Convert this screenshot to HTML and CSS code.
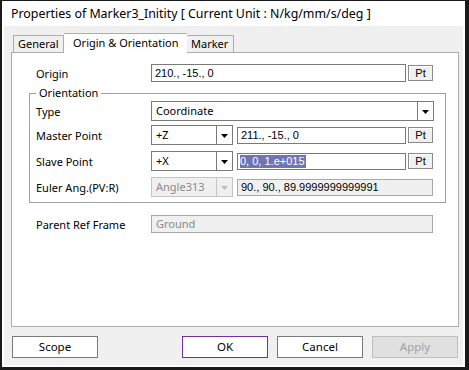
FILE: index.html
```html
<!DOCTYPE html>
<html>
<head>
<meta charset="utf-8">
<link rel="stylesheet" href="styles.css">
</head>
<body>
<div class="window">
  <div class="titlebar">Properties of Marker3_Initity [ Current Unit : N/kg/mm/s/deg ]</div>
  <div class="client">
    <div class="tabs">
      <div class="tab t-general">General</div>
      <div class="tab active">Origin &amp; Orientation</div>
      <div class="tab t-marker">Marker</div>
    </div>
    <div class="panel">
      <div class="row origin-row">
        <span class="lbl">Origin</span>
        <div class="edit w-origin">210., -15., 0</div>
        <div class="pt">Pt</div>
      </div>
      <fieldset class="group">
        <legend>Orientation</legend>
        <div class="row type-row">
          <span class="lbl">Type</span>
          <div class="combo w-type"><span class="val">Coordinate</span><span class="arrow"><svg width="7" height="4" viewBox="0 0 7 4"><path d="M0 0H7L3.5 4Z" fill="#000"/></svg></span></div>
        </div>
        <div class="row master-row">
          <span class="lbl">Master Point</span>
          <div class="combo w-small"><span class="val">+Z</span><span class="arrow"><svg width="7" height="4" viewBox="0 0 7 4"><path d="M0 0H7L3.5 4Z" fill="#000"/></svg></span></div>
          <div class="edit w-pt">211., -15., 0</div>
          <div class="pt">Pt</div>
        </div>
        <div class="row slave-row">
          <span class="lbl">Slave Point</span>
          <div class="combo w-small"><span class="val">+X</span><span class="arrow"><svg width="7" height="4" viewBox="0 0 7 4"><path d="M0 0H7L3.5 4Z" fill="#000"/></svg></span></div>
          <div class="edit w-pt"><span class="sel">0, 0, 1.e+015</span></div>
          <div class="pt">Pt</div>
        </div>
        <div class="row euler-row">
          <span class="lbl">Euler Ang.(PV:R)</span>
          <div class="combo w-small disabled"><span class="val">Angle313</span><span class="arrow"><svg width="7" height="4" viewBox="0 0 7 4"><path d="M0 0H7L3.5 4Z" fill="#bcbcbc"/></svg></span></div>
          <div class="edit w-euler readonly">90., 90., 89.9999999999991</div>
        </div>
      </fieldset>
      <div class="row parent-row">
        <span class="lbl">Parent Ref Frame</span>
        <div class="edit w-parent readonly gray-text">Ground</div>
      </div>
    </div>
    <div class="buttons">
      <div class="btn">Scope</div>
      <div class="spacer"></div>
      <div class="btn default">OK</div>
      <div class="btn">Cancel</div>
      <div class="btn disabled">Apply</div>
    </div>
  </div>
</div>
</body>
</html>
```

FILE: styles.css
```css
* { box-sizing: border-box; }
html, body { margin: 0; padding: 0; background: #fff; }
body { font-family: "Noto Sans", "Open Sans", sans-serif; font-size: 11px; color: #000; }

.window {
  width: 469px;
  height: 370px;
  border-style: solid;
  border-color: #1a1a1a;
  border-width: 1px 4px 3px 2px;
  padding: 0 2px 2px 2px;
  background: #fff;
  display: flex;
  flex-direction: column;
}
.titlebar {
  height: 25px;
  padding-left: 7px;
  padding-top: 4px;
  font-size: 12.4px;
  line-height: 17px;
  white-space: nowrap;
  color: #000;
}
.client {
  flex: 1;
  background: #f0f0f0;
  padding: 7px 4px 0 7px;
  display: flex;
  flex-direction: column;
}
.tabs {
  display: flex;
  align-items: flex-end;
  padding-left: 2px;
  height: 20px;
  position: relative;
  z-index: 1;
  margin-bottom: -1px;
}
.tab {
  height: 17px;
  border: 1px solid #adadad;
  border-bottom: none;
  background: #f0f0f0;
  font-size: 11px;
  line-height: 16px;
  white-space: nowrap;
  margin-bottom: 1px;
  flex: none;
}
.t-general { width: 51px; padding-left: 4px; }
.tab.active {
  height: 20px;
  width: 123px;
  background: #fff;
  margin-bottom: 0;
  border-left: none;
  border-right: none;
  padding-left: 9px;
  line-height: 17px;
}
.t-marker { width: 47px; border-left: none; padding-left: 4px; }

.panel {
  width: 448px;
  height: 275px;
  background: #fff;
  border: 1px solid #adadad;
  display: flex;
  flex-direction: column;
}

.row {
  display: flex;
  align-items: center;
}
.lbl {
  width: 115px;
  flex: none;
  white-space: nowrap;
  font-size: 11px;
}
.origin-row { margin: 11px 0 0 24px; height: 18px; }
.parent-row { margin: 12px 0 0 24px; height: 18px; }

.group {
  margin: 4px 0 0 17px;
  width: 417px;
  border: 1px solid #a0a0a0;
  padding: 0 0 5px 6px;
  min-width: 0;
}
.group legend {
  padding: 0 3px;
  font-size: 11px;
  line-height: 14px;
}
.type-row { margin-top: 1px; height: 20px; }
.master-row { margin-top: 4px; height: 20px; }
.slave-row { margin-top: 6px; height: 20px; }
.euler-row { margin-top: 6px; height: 20px; }

.edit {
  height: 18px;
  border: 1px solid #7a7a7a;
  background: #fff;
  font-family: "Liberation Sans", Arial, sans-serif;
  font-size: 11px;
  line-height: 16px;
  padding-left: 3px;
  white-space: nowrap;
  flex: none;
}
.edit.readonly { background: #f0f0f0; border-color: #a8a8a8; }
.edit.gray-text {
  color: #8a8a8a;
  font-family: "Noto Sans", "Open Sans", sans-serif;
  font-size: 11px;
  padding-left: 4px;
}
.w-origin { width: 255px; }
.w-pt { width: 169px; margin-left: 4px; height: 17px; line-height: 15px; }
.w-euler { width: 196px; margin-left: 4px; height: 17px; line-height: 15px; }
.w-parent { width: 282px; }

.sel {
  background: #6e75b2;
  color: #fff;
  display: inline-block;
  line-height: 13px;
  padding: 0 1px 0 0;
  margin-left: -1px;
}

.pt {
  width: 25px;
  height: 16px;
  margin-left: 2px;
  border: 1px solid #8a8a8a;
  background: #f0f0f0;
  box-shadow: inset 1px 1px 0 #fff;
  font-family: "Liberation Sans", Arial, sans-serif;
  font-size: 11px;
  line-height: 14px;
  text-align: center;
  flex: none;
}

.combo {
  height: 20px;
  border: 1px solid #7a7a7a;
  background: #fff;
  display: flex;
  flex: none;
}
.combo .val {
  flex: 1;
  padding-left: 4px;
  line-height: 18px;
  font-size: 11px;
  white-space: nowrap;
  overflow: hidden;
}
.combo .arrow {
  width: 16px;
  border-left: 1px solid #7a7a7a;
  display: flex;
  align-items: center;
  justify-content: center;
  padding-top: 1px;
}
.combo.disabled { background: #f0f0f0; border-color: #c4c4c4; }
.combo.disabled .val { color: #8a8a8a; }
.combo.disabled .arrow { border-left-color: #c4c4c4; }
.w-type { width: 283px; }
.w-small { width: 82px; }

.buttons {
  display: flex;
  margin: 9px 0 0 1px;
  gap: 9px;
  padding-right: 1px;
}
.spacer { flex: 1; }
.btn {
  width: 86px;
  height: 22px;
  border: 1px solid #7a7a7a;
  background: #fff;
  text-align: center;
  line-height: 20px;
  font-size: 11.5px;
}
.btn.default { border-color: #7030a0; }
.btn.disabled { background: #e0e0e0; border-color: #bfbfbf; color: #a0a0a0; }
```
